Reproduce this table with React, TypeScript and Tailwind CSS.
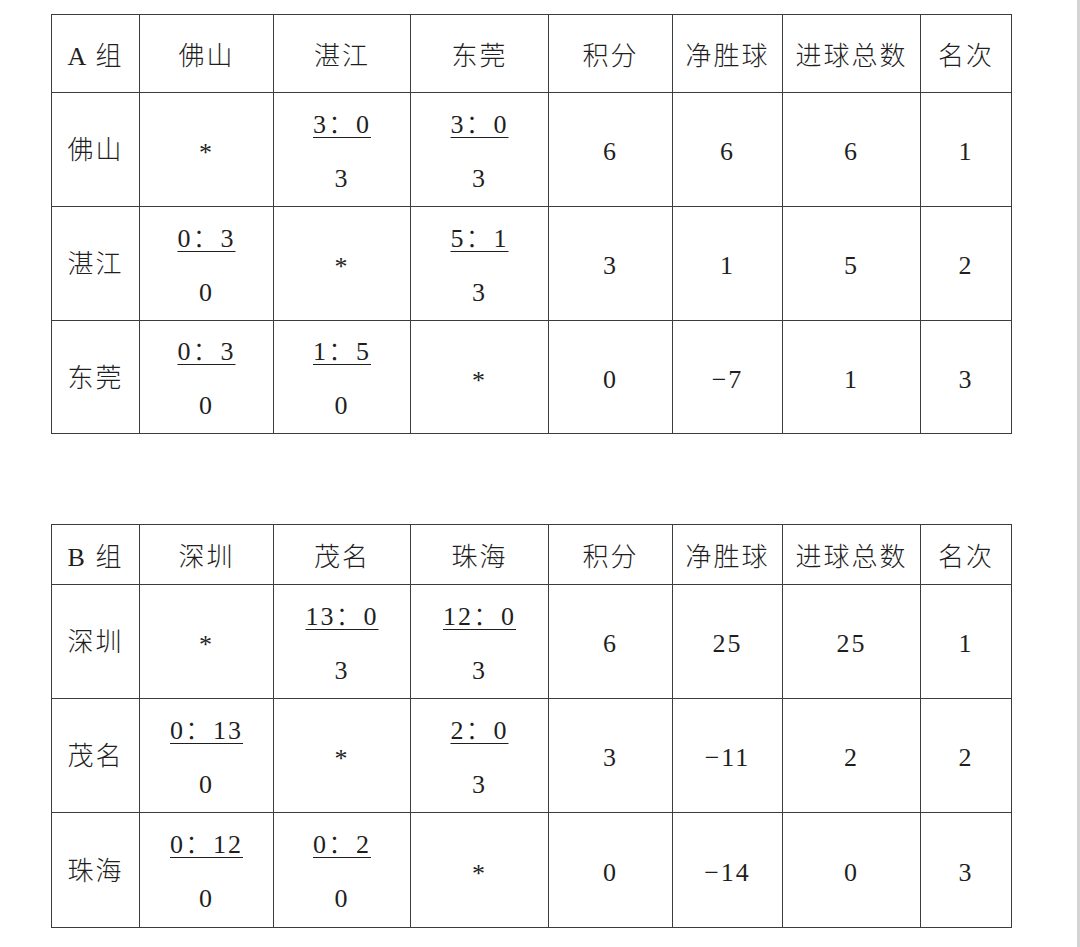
import React from 'react';

type Cell = string | { top: string; bottom: string };

interface GroupTable {
  title: string;
  teams: string[];
  headerHeight: string;
  rowHeights: string[];
  rows: Cell[][];
}

const columns = ['w-[88px]', 'w-[134px]', 'w-[137px]', 'w-[138px]', 'w-[124px]', 'w-[110px]', 'w-[138px]', 'w-[91px]'];
const stats = ['积分', '净胜球', '进球总数', '名次'];

const groups: GroupTable[] = [
  {
    title: 'A 组',
    teams: ['佛山', '湛江', '东莞'],
    headerHeight: 'h-[78px]',
    rowHeights: ['h-[114px]', 'h-[114px]', 'h-[113px]'],
    rows: [
      ['*', { top: '3：0', bottom: '3' }, { top: '3：0', bottom: '3' }, '6', '6', '6', '1'],
      [{ top: '0：3', bottom: '0' }, '*', { top: '5：1', bottom: '3' }, '3', '1', '5', '2'],
      [{ top: '0：3', bottom: '0' }, { top: '1：5', bottom: '0' }, '*', '0', '−7', '1', '3'],
    ],
  },
  {
    title: 'B 组',
    teams: ['深圳', '茂名', '珠海'],
    headerHeight: 'h-[60px]',
    rowHeights: ['h-[114px]', 'h-[114px]', 'h-[115px]'],
    rows: [
      ['*', { top: '13：0', bottom: '3' }, { top: '12：0', bottom: '3' }, '6', '25', '25', '1'],
      [{ top: '0：13', bottom: '0' }, '*', { top: '2：0', bottom: '3' }, '3', '−11', '2', '2'],
      [{ top: '0：12', bottom: '0' }, { top: '0：2', bottom: '0' }, '*', '0', '−14', '0', '3'],
    ],
  },
];

const tdBase = 'border border-[#3c3c3c] p-0 text-center align-middle';

const CellContent = ({ cell }: { cell: Cell }) => {
  if (typeof cell !== 'string') {
    return (
      <div className="flex flex-col items-center pt-[4px] leading-[54px]">
        <span className="underline decoration-1 underline-offset-[4px]">{cell.top}</span>
        <span>{cell.bottom}</span>
      </div>
    );
  }
  if (cell === '*') {
    return <span className="inline-block translate-y-[3px] text-[26px]">*</span>;
  }
  return <span className="inline-block pt-[4px]">{cell}</span>;
};

const Table = ({ group }: { group: GroupTable }) => (
  <table className="w-[961px] table-fixed border-collapse self-start">
    <colgroup>
      {columns.map((w, i) => (
        <col key={i} className={w} />
      ))}
    </colgroup>
    <tbody>
      <tr className={group.headerHeight}>
        <td className={`${tdBase} pt-[6px]`}>{group.title}</td>
        {group.teams.map((t) => (
          <td key={t} className={`${tdBase} pt-[6px]`}>{t}</td>
        ))}
        {stats.map((s) => (
          <td key={s} className={`${tdBase} pt-[6px]`}>{s}</td>
        ))}
      </tr>
      {group.rows.map((row, r) => (
        <tr key={r} className={group.rowHeights[r]}>
          <td className={`${tdBase} pt-[2px]`}>{group.teams[r]}</td>
          {row.map((cell, c) => (
            <td key={c} className={tdBase}>
              <CellContent cell={cell} />
            </td>
          ))}
        </tr>
      ))}
    </tbody>
  </table>
);

export default function App() {
  return (
    <div className="flex h-[947px] w-[1080px] overflow-hidden bg-white">
      <div
        className="flex flex-1 flex-col gap-[90px] pl-[51px] pt-[14px] text-[26px] font-light tracking-[2px] text-[#1f1f1f]"
        style={{ fontFamily: '"Liberation Serif", "Noto Sans CJK SC", serif' }}
      >
        {groups.map((g) => (
          <Table key={g.title} group={g} />
        ))}
      </div>
      <div className="w-[3px] bg-[#d4d4d4]" />
    </div>
  );
}
